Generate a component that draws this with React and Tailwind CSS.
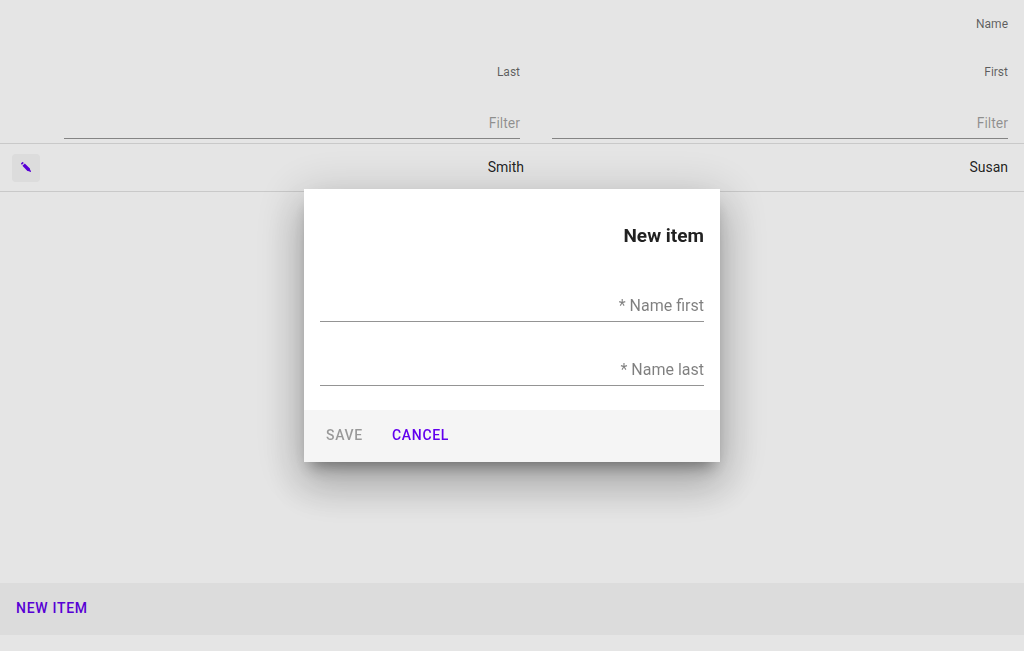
function PencilIcon() {
  return (
    <svg viewBox="0 0 10 10" className="h-[10px] w-[10px]" fill="currentColor" aria-hidden="true">
      <path d="M0 1.5 1.4 .1 Q2 0 2.8 .9L.9 2.8Q-.2 2 0 1.5ZM3.8 1.4 8.9 6.4 9.2 8.1 10.2 9.2 9.3 10.1 8.1 9.2 6.4 8.9 1.4 3.8Z" />
    </svg>
  );
}

function FilterField({ id }) {
  return (
    <div className="grid">
      <input
        id={id}
        placeholder=" "
        className="peer col-start-1 row-start-1 h-8 w-full border-b border-[#949494] bg-transparent text-right text-sm text-black/87 outline-none"
      />
      <label
        htmlFor={id}
        className="invisible col-start-1 row-start-1 self-center justify-self-end text-sm text-black/38 peer-placeholder-shown:visible"
      >
        Filter
      </label>
    </div>
  );
}

function DialogField({ id, label }) {
  return (
    <div className="grid">
      <input
        id={id}
        required
        placeholder=" "
        className="peer col-start-1 row-start-1 h-8 w-full border-b border-[#949494] bg-transparent text-right text-base text-black/87 outline-none"
      />
      <label
        htmlFor={id}
        className="invisible col-start-1 row-start-1 self-start justify-self-end text-base leading-[31px] text-black/50 peer-placeholder-shown:visible"
      >
        * {label}
      </label>
    </div>
  );
}

export default function App() {
  return (
    <div className="font-[Roboto,sans-serif] text-black/87">
      <div className="flex min-h-screen flex-col bg-white pb-4">
        <main className="grow">
          <table className="w-full table-fixed border-separate border-spacing-0 text-right text-sm">
            <colgroup>
              <col className="w-12" />
              <col />
              <col />
            </colgroup>
            <thead className="text-xs text-black/60">
              <tr>
                <th colSpan={3} className="h-12 px-4 py-0 font-normal">Name</th>
              </tr>
              <tr>
                <td />
                <th className="h-12 px-4 py-0 font-normal">Last</th>
                <th className="h-12 px-4 py-0 font-normal">First</th>
              </tr>
              <tr>
                <td className="h-12 border-b border-black/12 p-0" />
                <td className="h-12 border-b border-black/12 px-4 pt-[7px] pb-1 align-bottom">
                  <FilterField id="filter-last" />
                </td>
                <td className="h-12 border-b border-black/12 px-4 pt-[7px] pb-1 align-bottom">
                  <FilterField id="filter-first" />
                </td>
              </tr>
            </thead>
            <tbody>
              <tr>
                <td className="h-12 border-b border-black/12 py-0 pl-3">
                  <button type="button" aria-label="Edit" className="flex h-7 w-7 items-center justify-center rounded bg-[#f5f5f5] pb-0.5 text-[#6200ee]">
                    <PencilIcon />
                  </button>
                </td>
                <td className="h-12 border-b border-black/12 pt-0 pr-3 pb-0.5">Smith</td>
                <td className="h-12 border-b border-black/12 px-4 pt-0 pb-0.5">Susan</td>
              </tr>
            </tbody>
          </table>
        </main>
        <footer className="flex h-[52px] items-center bg-[#f5f5f5] px-4 pb-0.5">
          <button type="button" className="text-sm font-medium tracking-wider text-[#6200ee] uppercase">New item</button>
        </footer>
      </div>

      <div className="fixed inset-0 flex items-center justify-center bg-black/10 p-4">
        <form
          role="dialog"
          aria-modal="true"
          aria-labelledby="dialog-title"
          className="w-full max-w-[416px] bg-white shadow-[0_11px_15px_-7px_rgba(0,0,0,0.38),0_24px_38px_3px_rgba(0,0,0,0.17),0_9px_46px_8px_rgba(0,0,0,0.15)]"
        >
          <div className="px-4 pt-8 pb-6 text-right">
            <h2 id="dialog-title" className="text-[19px] leading-[29px] font-bold">New item</h2>
            <div className="mt-10 flex flex-col gap-8">
              <DialogField id="name-first" label="Name first" />
              <DialogField id="name-last" label="Name last" />
            </div>
          </div>
          <div className="flex h-[52px] items-center gap-[9px] bg-[#f5f5f5] px-3 pb-0.5">
            <button type="submit" disabled className="px-[10px] text-sm font-medium tracking-wider text-black/38 uppercase">Save</button>
            <button type="button" className="px-[10px] text-sm font-medium tracking-wider text-[#6200ee] uppercase">Cancel</button>
          </div>
        </form>
      </div>
    </div>
  );
}
